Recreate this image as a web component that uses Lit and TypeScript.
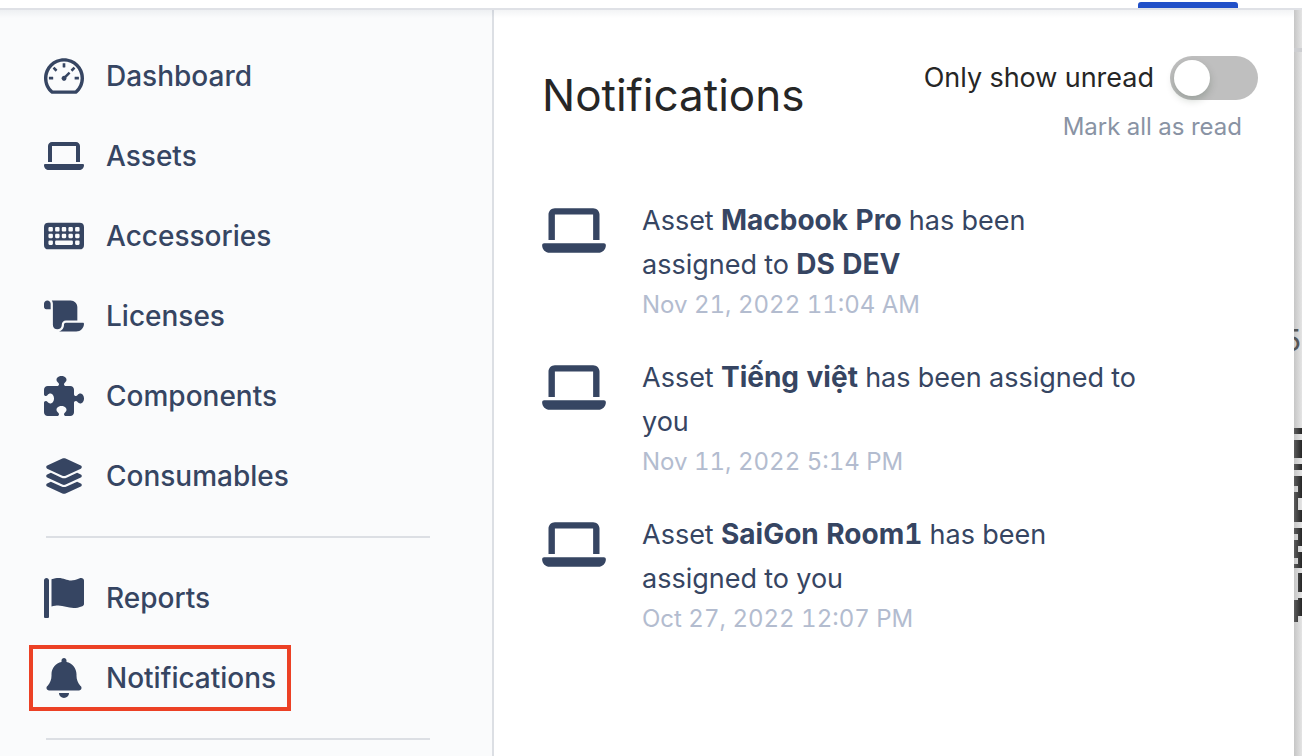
import { LitElement, html, css, svg } from "lit";
import { customElement, state } from "lit/decorators.js";

const LAPTOP = "M128 32C92.7 32 64 60.7 64 96V352h64V96H512V352h64V96c0-35.3-28.7-64-64-64H128zM19.2 384C8.6 384 0 392.6 0 403.2C0 445.6 34.4 480 76.8 480H563.2c42.4 0 76.8-34.4 76.8-76.8c0-10.6-8.6-19.2-19.2-19.2H19.2z";

const keys = [
  [64, 128, 64], [160, 128, 64], [256, 128, 64], [352, 128, 64], [448, 128, 64],
  [64, 224, 64], [160, 224, 64], [256, 224, 64], [352, 224, 64], [448, 224, 64],
  [64, 320, 64], [160, 320, 256], [448, 320, 64],
].map(([x, y, w]) => `M${x + 16} ${y}h${w - 32}q16 0 16 16v32q0 16-16 16h-${w - 32}q-16 0-16-16v-32q0-16 16-16z`).join("");

const ICONS: Record<string, { box: string; d: string }> = {
  dashboard: { box: "64 64 896 896", d: "M924.8 385.6a446.7 446.7 0 00-96-142.4 446.7 446.7 0 00-142.4-96C631.1 123.8 572.5 112 512 112s-119.1 11.8-174.4 35.2a446.7 446.7 0 00-142.4 96 446.7 446.7 0 00-96 142.4C75.8 440.9 64 499.5 64 560c0 132.7 58.3 257.7 159.9 343.1l1.7 1.4c5.8 4.8 13.1 7.5 20.6 7.5h531.7c7.5 0 14.8-2.7 20.6-7.5l1.7-1.4C901.7 817.7 960 692.7 960 560c0-60.5-11.9-119.1-35.2-174.4zM761.4 836H262.6A371.12 371.12 0 01140 560c0-99.4 38.7-192.8 109-263 70.3-70.3 163.7-109 263-109 99.4 0 192.8 38.7 263 109 70.3 70.3 109 163.7 109 263 0 105.6-44.5 205.5-122.6 276zM623.5 421.5a8.03 8.03 0 00-11.3 0L527.7 506c-18.7-5-39.4-.2-54.1 14.5a55.95 55.95 0 000 79.2 55.95 55.95 0 0079.2 0 55.87 55.87 0 0014.5-54.1l84.5-84.5c3.1-3.1 3.1-8.2 0-11.3l-28.3-28.3zM490 320h44c4.4 0 8-3.6 8-8v-80c0-4.4-3.6-8-8-8h-44c-4.4 0-8 3.6-8 8v80c0 4.4 3.6 8 8 8zm260 218v44c0 4.4 3.6 8 8 8h80c4.4 0 8-3.6 8-8v-44c0-4.4-3.6-8-8-8h-80c-4.4 0-8 3.6-8 8zm12.7-197.2l-31.1-31.1a8.03 8.03 0 00-11.3 0l-56.6 56.6a8.03 8.03 0 000 11.3l31.1 31.1c3.1 3.1 8.2 3.1 11.3 0l56.6-56.6c3.1-3.1 3.1-8.2 0-11.3zm-458.6-31.1a8.03 8.03 0 00-11.3 0l-31.1 31.1a8.03 8.03 0 000 11.3l56.6 56.6c3.1 3.1 8.2 3.1 11.3 0l31.1-31.1c3.1-3.1 3.1-8.2 0-11.3l-56.6-56.6zM262 530h-80c-4.4 0-8 3.6-8 8v44c0 4.4 3.6 8 8 8h80c4.4 0 8-3.6 8-8v-44c0-4.4-3.6-8-8-8z" },
  laptop: { box: "0 0 640 512", d: LAPTOP },
  keyboard: { box: "0 0 576 512", d: "M64 64h448q64 0 64 64v256q0 64-64 64H64q-64 0-64-64V128q0-64 64-64z" + keys },
  scroll: { box: "0 0 576 512", d: "M0 80v48c0 17.7 14.3 32 32 32H48 96V80c0-26.5-21.5-48-48-48S0 53.5 0 80zM112 32c10 13.4 16 30 16 48V384c0 35.3 28.7 64 64 64s64-28.7 64-64v-5.3c0-32.4 26.3-58.7 58.7-58.7H480V128c0-53-43-96-96-96H112zM464 480c61.9 0 112-50.1 112-112c0-8.8-7.2-16-16-16H314.7c-14.7 0-26.7 11.9-26.7 26.7V384c0 53-43 96-96 96H368h96z" },
  puzzle: { box: "0 0 512 512", d: "M192 104.8c0-9.2-5.8-17.3-13.2-22.8C167.2 73.3 160 61.3 160 48c0-26.5 28.7-48 64-48s64 21.5 64 48c0 13.3-7.2 25.3-18.8 34c-7.4 5.5-13.2 13.6-13.2 22.8v0c0 12.8 10.4 23.2 23.2 23.2H336c26.5 0 48 21.5 48 48v56.8c0 12.8 10.4 23.2 23.2 23.2v0c9.2 0 17.3-5.8 22.8-13.2c8.7-11.6 20.7-18.8 34-18.8c26.5 0 48 28.7 48 64s-21.5 64-48 64c-13.3 0-25.3-7.2-34-18.8c-5.5-7.4-13.6-13.2-22.8-13.2v0c-12.8 0-23.2 10.4-23.2 23.2V464c0 26.5-21.5 48-48 48H279.2c-12.8 0-23.2-10.4-23.2-23.2v0c0-9.2 5.8-17.3 13.2-22.8c11.6-8.7 18.8-20.7 18.8-34c0-26.5-28.7-48-64-48s-64 21.5-64 48c0 13.3 7.2 25.3 18.8 34c7.4 5.5 13.2 13.6 13.2 22.8v0c0 12.8-10.4 23.2-23.2 23.2H48c-26.5 0-48-21.5-48-48V343.2C0 330.4 10.4 320 23.2 320v0c9.2 0 17.3 5.8 22.8 13.2C54.7 344.8 66.7 352 80 352c26.5 0 48-28.7 48-64s-21.5-64-48-64c-13.3 0-25.3 7.2-34 18.8C40.5 250.2 32.4 256 23.2 256v0C10.4 256 0 245.6 0 232.8V176c0-26.5 21.5-48 48-48H168.8c12.8 0 23.2-10.4 23.2-23.2v0z" },
  layers: { box: "0 0 576 512", d: "M264.5 5.2c14.9-6.9 32.1-6.9 47 0l218.6 101c8.5 3.9 13.9 12.4 13.9 21.8s-5.4 17.9-13.9 21.8l-218.6 101c-14.9 6.9-32.1 6.9-47 0L45.9 149.8C37.4 145.8 32 137.3 32 128s5.4-17.9 13.9-21.8L264.5 5.2zM476.9 209.6l53.2 24.6c8.5 3.9 13.9 12.4 13.9 21.8s-5.4 17.9-13.9 21.8l-218.6 101c-14.9 6.9-32.1 6.9-47 0L45.9 277.8C37.4 273.8 32 265.3 32 256s5.4-17.9 13.9-21.8l53.2-24.6 152 70.2c23.4 10.8 50.4 10.8 73.8 0l152-70.2zm-152 198.2l152-70.2 53.2 24.6c8.5 3.9 13.9 12.4 13.9 21.8s-5.4 17.9-13.9 21.8l-218.6 101c-14.9 6.9-32.1 6.9-47 0L45.9 405.8C37.4 401.8 32 393.3 32 384s5.4-17.9 13.9-21.8l53.2-24.6 152 70.2c23.4 10.8 50.4 10.8 73.8 0z" },
  flag: { box: "0 0 512 512", d: "M64 496C64 504.8 56.75 512 48 512h-32C7.25 512 0 504.8 0 496V32c0-17.75 14.25-32 32-32s32 14.25 32 32V496zM476.3 0c-6.365 0-13.01 1.35-19.34 4.233c-45.69 20.86-79.56 27.94-107.8 27.94c-59.96 0-94.81-31.86-163.9-31.87C160.9 .3055 131.6 4.867 96 15.75v350.5c32-9.984 59.87-14.1 84.85-14.1c73.63 0 124.9 31.78 198.6 31.78c31.91 0 68.02-5.971 111.1-23.09C504.1 355.9 512 344.4 512 332.1V30.73C512 11.1 495.3 0 476.3 0z" },
  bell: { box: "0 0 448 512", d: "M256 32V51.2C329 66.03 384 130.6 384 208V226.8C384 273.9 401.3 319.2 432.5 354.4L439.9 362.7C448.3 372.2 450.4 385.6 445.2 397.1C440 408.6 428.6 416 416 416H32C19.4 416 7.971 408.6 2.809 397.1C-2.353 385.6-.2883 372.2 8.084 362.7L15.5 354.4C46.74 319.2 64 273.9 64 226.8V208C64 130.6 118.1 66.03 192 51.2V32C192 14.33 206.3 0 224 0C241.7 0 256 14.33 256 32H256zM224 512C207 512 190.7 505.3 178.7 493.3C166.7 481.3 160 464.1 160 448H288C288 464.1 281.3 481.3 269.3 493.3C257.3 505.3 240.1 512 224 512z" },
};

const icon = (name: string) => html`<svg class="icon" viewBox=${ICONS[name].box} fill="currentColor" fill-rule="evenodd" aria-hidden="true">${svg`<path d=${ICONS[name].d}></path>`}</svg>`;

const MAIN = [
  ["dashboard", "Dashboard"],
  ["laptop", "Assets"],
  ["keyboard", "Accessories"],
  ["scroll", "Licenses"],
  ["puzzle", "Components"],
  ["layers", "Consumables"],
];
const MORE = [
  ["flag", "Reports"],
  ["bell", "Notifications"],
];

const NOTICES = [
  { asset: "Macbook Pro", who: html`<b>DS DEV</b>`, at: "Nov 21, 2022 11:04 AM" },
  { asset: "Tiếng việt", who: "you", at: "Nov 11, 2022 5:14 PM" },
  { asset: "SaiGon Room1", who: "you", at: "Oct 27, 2022 12:07 PM" },
];

@customElement("app-root")
export class AppRoot extends LitElement {
  @state() private unreadOnly = false;

  static styles = css`
    :host {
      display: flex;
      flex-direction: column;
      height: 100vh;
      overflow: hidden;
      box-sizing: border-box;
      font-family: Inter, "Noto Sans", sans-serif;
      font-size: 27px;
      font-variant-numeric: tabular-nums;
      color: #364562;
      background: #fff;
    }
    * { box-sizing: border-box; }
    .topbar {
      flex: none;
      display: flex;
      justify-content: flex-end;
      align-items: flex-end;
      height: 8px;
      padding-right: 64px;
    }
    .tab { width: 100px; height: 6px; border-radius: 3px 3px 0 0; background: #2150c8; }
    .body {
      flex: 1;
      min-height: 0;
      display: flex;
      position: relative;
      border-top: 2px solid #dfe1e6;
    }
    .body::before {
      content: "";
      position: absolute;
      inset: 0 0 auto;
      height: 8px;
      background: linear-gradient(rgba(9, 30, 66, 0.05), transparent);
    }
    .sidebar {
      flex: none;
      width: 494px;
      padding: 34px 62px 0 30px;
      background: #fafbfc;
      border-right: 2px solid #dcdfe4;
      overflow: hidden;
    }
    .list { list-style: none; margin: 0; padding: 0; display: grid; gap: 16px; }
    .list li { height: 64px; white-space: nowrap; }
    .link {
      display: inline-flex;
      align-items: center;
      gap: 22px;
      height: 64px;
      padding: 0 14px;
      color: inherit;
      font-size: 28px;
      font-weight: 500;
      text-decoration: none;
      vertical-align: top;
    }
    .marked { outline: 4px solid #ec4125; outline-offset: -3px; }
    .link .icon { width: 40px; height: 40px; flex: none; }
    .rule { height: 2px; margin: 28px 0 28px 16px; border: 0; background: #dcdfe4; }
    .panel {
      flex: 1;
      min-width: 0;
      padding: 46px 36px 0 48px;
    }
    .head { display: flex; justify-content: space-between; align-items: flex-start; }
    .title { margin: 12px 0 0; font-size: 44px; line-height: 54px; font-weight: 400; color: #262626; }
    .tools { display: flex; flex-direction: column; align-items: flex-end; gap: 8px; }
    .toggle { display: flex; align-items: center; gap: 16px; color: #262626; line-height: 44px; }
    .switch {
      appearance: none;
      display: flex;
      width: 88px;
      height: 44px;
      margin: 0;
      padding: 4px;
      border-radius: 22px;
      background: #bfbfbf;
    }
    .switch::before {
      content: "";
      width: 36px;
      height: 36px;
      border-radius: 50%;
      background: #fff;
      box-shadow: 0 4px 8px rgba(0, 35, 11, 0.2);
    }
    .switch:checked { justify-content: flex-end; background: #2150c8; }
    .mark {
      margin-right: 16px;
      padding: 0;
      border: 0;
      background: none;
      font: inherit;
      font-size: 24px;
      line-height: 38px;
      color: #8993a4;
    }
    .notices { list-style: none; margin: 53px 0 0; padding: 0; display: grid; gap: 33px; }
    .notice { display: flex; gap: 36px; }
    .notice .icon { width: 64px; height: 51px; flex: none; margin-top: 6px; }
    .text { margin: 0; max-width: 500px; line-height: 44px; }
    .text b { font-size: 28px; line-height: 1; }
    .time { display: block; font-size: 24px; line-height: 36px; color: #b3bccf; }
    .behind {
      flex: none;
      position: relative;
      width: 8px;
      background: linear-gradient(90deg, #c6c6c6, #e4e4e4);
      overflow: hidden;
    }
    .peek { display: block; width: 8px; height: 746px; }
    .count {
      position: absolute;
      top: 312px;
      right: 0;
      font-size: 30px;
      line-height: 36px;
      color: #555;
    }
  `;

  private nav(items: string[][]) {
    return html`<ul class="list">
      ${items.map(([i, label]) => html`<li><a class="link ${label === "Notifications" ? "marked" : ""}" href="#">${icon(i)}<span>${label}</span></a></li>`)}
    </ul>`;
  }

  render() {
    return html`
      <header class="topbar"><div class="tab"></div></header>
      <div class="body">
        <nav class="sidebar">
          ${this.nav(MAIN)}
          <hr class="rule" />
          ${this.nav(MORE)}
          <hr class="rule" />
        </nav>
        <main class="panel">
          <div class="head">
            <h1 class="title">Notifications</h1>
            <div class="tools">
              <label class="toggle" for="unread">Only show unread
                <input class="switch" id="unread" type="checkbox" role="switch" .checked=${this.unreadOnly}
                  @change=${(e: Event) => (this.unreadOnly = (e.target as HTMLInputElement).checked)} />
              </label>
              <button class="mark" type="button">Mark all as read</button>
            </div>
          </div>
          <ul class="notices">
            ${NOTICES.map((n) => html`<li class="notice">
              ${icon("laptop")}
              <div>
                <p class="text">Asset <b>${n.asset}</b> has been assigned to ${n.who}</p>
                <time class="time">${n.at}</time>
              </div>
            </li>`)}
          </ul>
        </main>
        <aside class="behind" aria-hidden="true">
          <svg class="peek" viewBox="0 10 8 746">
            <defs>
              <linearGradient id="ink" gradientUnits="userSpaceOnUse" x1="0" y1="0" x2="8" y2="0">
                <stop offset="0" stop-color="#5c5c5c" /><stop offset="1" stop-color="#262626" />
              </linearGradient>
            </defs>
            <path fill="#cdced1" d="M0 48h8v4H0z" />
            <path fill="url(#ink)" fill-rule="evenodd" d="M0 428h8v6H0zM0 440h8v18H0zM0 464h8v6H0zM0 476h8v46H0zM0 528h8v40H0zM4 573h4v43H4v6H0v-22h4zM0 486h4v6H0zM4 498h4v12H4zM0 534h4v6H0zM4 546h4v6H4zM0 558h4v6H0zM4 592h4v6H4z" />
          </svg>
          <span class="count">5</span>
        </aside>
      </div>
    `;
  }
}
